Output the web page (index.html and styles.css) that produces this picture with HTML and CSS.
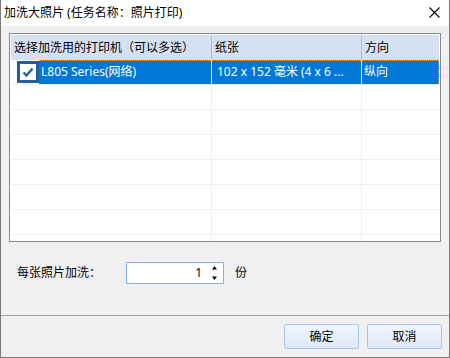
FILE: index.html
```html
<!DOCTYPE html>
<html lang="zh-CN">
<head>
<meta charset="utf-8">
<title>加洗大照片</title>
<link rel="stylesheet" href="styles.css">
</head>
<body>
<div class="window">
  <div class="titlebar">
    <span class="title">加洗大照片 (任务名称：照片打印)</span>
    <svg class="close" width="11" height="11" viewBox="0 0 11 11"><path d="M0.5 0.5 L10.5 10.5 M10.5 0.5 L0.5 10.5" stroke="#000" stroke-width="1.1" fill="none"/></svg>
  </div>
  <div class="main">
    <div class="list">
      <div class="row head">
        <div class="cell c1">选择加洗用的打印机（可以多选）</div>
        <div class="cell c2">纸张</div>
        <div class="cell c3">方向</div>
      </div>
      <div class="row sel">
        <div class="cell c1 first">
          <span class="chk"><span class="box"><svg width="16" height="16" viewBox="0 0 16 16"><path d="M3.5 8.5 L6.5 11.5 L12.5 4.5" stroke="#1f5fae" stroke-width="2.4" fill="none"/></svg></span></span>
          <span class="lbl">L805 Series(网络)</span>
        </div>
        <div class="cell c2">102 x 152 毫米 (4 x 6 ...</div>
        <div class="cell c3">纵向</div>
        <span class="focus"></span>
      </div>
      <div class="row"><div class="cell c1"></div><div class="cell c2"></div><div class="cell c3"></div></div>
      <div class="row"><div class="cell c1"></div><div class="cell c2"></div><div class="cell c3"></div></div>
      <div class="row"><div class="cell c1"></div><div class="cell c2"></div><div class="cell c3"></div></div>
      <div class="row"><div class="cell c1"></div><div class="cell c2"></div><div class="cell c3"></div></div>
      <div class="row"><div class="cell c1"></div><div class="cell c2"></div><div class="cell c3"></div></div>
      <div class="row"><div class="cell c1"></div><div class="cell c2"></div><div class="cell c3"></div></div>
      <div class="row"><div class="cell c1"></div><div class="cell c2"></div><div class="cell c3"></div></div>
    </div>
    <div class="spinrow">
      <span class="spinlabel">每张照片加洗：</span>
      <div class="spin">
        <span class="val">1</span>
        <span class="arrows">
          <svg width="7" height="16" viewBox="0 0 7 16"><path d="M3.5 1 L6 4.5 L1 4.5 Z M1 11.5 L6 11.5 L3.5 15 Z" fill="#000"/></svg>
        </span>
      </div>
      <span class="unit">份</span>
    </div>
  </div>
  <div class="footer">
    <button class="btn">确定</button>
    <button class="btn">取消</button>
  </div>
</div>
</body>
</html>
```

FILE: styles.css
```css
html, body {
  margin: 0;
  padding: 0;
}
body {
  width: 450px;
  height: 358px;
  font-family: "Noto Sans", "Noto Sans CJK SC", sans-serif;
  font-size: 12px;
  color: #000;
  overflow: hidden;
}
.window {
  width: 450px;
  height: 358px;
  box-sizing: border-box;
  border: 1px solid #7a7a7a;
  border-top: none;
  background: #f0f0f0;
  display: flex;
  flex-direction: column;
}
.titlebar {
  height: 26px;
  background: #fff;
  display: flex;
  align-items: center;
  justify-content: space-between;
  padding: 0 9px 0 3px;
  flex: none;
}
.title {
  line-height: 16px;
  margin-top: -1px;
}
.close {
  display: block;
  margin-top: -2px;
}
.main {
  flex: 1;
  padding: 7px 8px 0 8px;
}
.list {
  height: 209px;
  box-sizing: border-box;
  border: 1px solid #828790;
  background: #fff;
  padding: 1px;
  overflow: hidden;
}
.row {
  display: flex;
  height: 25px;
  box-sizing: border-box;
  position: relative;
}
.cell {
  box-sizing: border-box;
  height: 100%;
  border-right: 1px solid #f0f0f0;
  border-bottom: 1px solid #f0f0f0;
  padding-left: 4px;
  display: flex;
  align-items: center;
  white-space: nowrap;
  overflow: hidden;
  line-height: 16px;
}
.c1 { width: 201px; }
.c2 { width: 150px; }
.c3 { flex: 1; border-right: none; padding-left: 2px; }
.head .cell {
  background: #d5e1f2;
  border-bottom: none;
  border-right-color: #aebbd0;
  padding-left: 3px;
}
.head .c2 { padding-left: 3px; }
.head .c3 { padding-left: 3px; }
.sel .cell {
  background: #0078d7;
  color: #fff;
}
.sel .c2 { padding-left: 5px; }
.sel .first {
  background: #fff;
  padding-left: 6px;
}
.chk {
  width: 22px;
  height: 22px;
  box-sizing: border-box;
  background: #225e9c;
  padding: 3px;
  flex: none;
  margin-top: -1px;
}
.box {
  display: block;
  width: 16px;
  height: 16px;
  background: #fff;
}
.box svg { display: block; }
.lbl {
  flex: 1;
  align-self: stretch;
  background: #0078d7;
  color: #fff;
  padding-left: 2px;
  display: flex;
  align-items: center;
}
.focus {
  position: absolute;
  left: 28px;
  right: 0;
  top: 0;
  height: 24px;
  box-sizing: border-box;
  border-top: 1px dotted #f39a2b;
  border-right: 1px dotted #f39a2b;
  pointer-events: none;
}
.spinrow {
  display: flex;
  align-items: center;
  margin-top: 20px;
  padding-left: 8px;
  height: 22px;
}
.spinlabel {
  width: 109px;
  line-height: 16px;
}
.spin {
  width: 98px;
  height: 22px;
  box-sizing: border-box;
  border: 1px solid #7eb4ea;
  background: #fff;
  display: flex;
  align-items: center;
  justify-content: flex-end;
}
.val {
  line-height: 16px;
  margin-right: 8px;
}
.arrows {
  width: 13px;
  display: flex;
  align-items: center;
}
.arrows svg { display: block; margin-left: 1px; }
.unit {
  margin-left: 11px;
  line-height: 16px;
}
.footer {
  flex: none;
  height: 42px;
  box-sizing: border-box;
  border-top: 1px solid #a0a0a0;
  display: flex;
  justify-content: flex-end;
  align-items: flex-start;
  gap: 8px;
  padding: 8px 7px 0 0;
}
.btn {
  width: 75px;
  height: 25px;
  box-sizing: border-box;
  border: 1px solid #a5c5ee;
  border-radius: 2px;
  background: linear-gradient(#f2f7fd, #dce8fb);
  font-family: "Noto Sans", "Noto Sans CJK SC", sans-serif;
  font-size: 12px;
  color: #000;
  padding: 0;
  line-height: 16px;
}
```
